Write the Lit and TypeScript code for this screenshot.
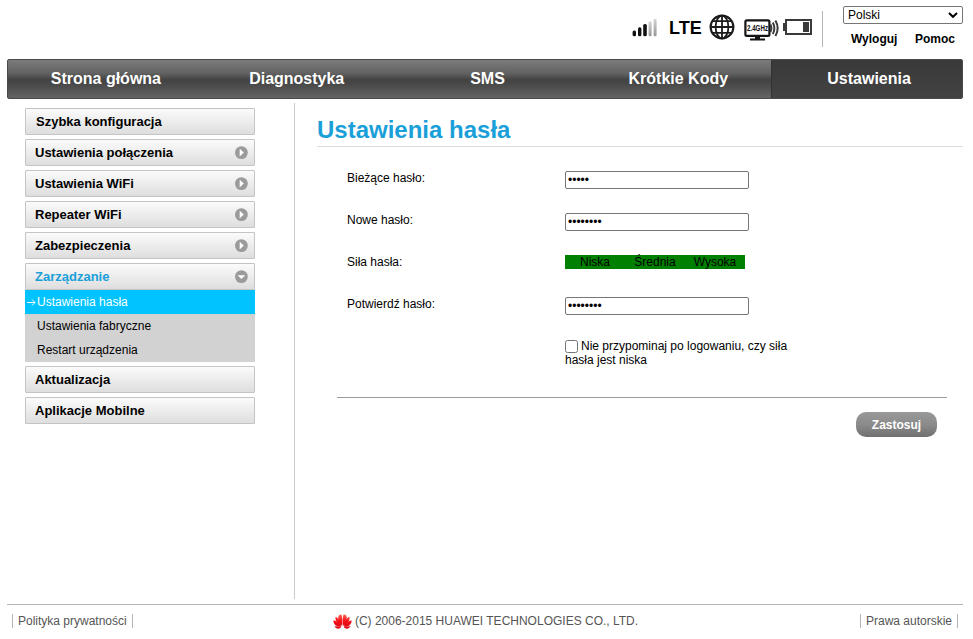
import { LitElement, html, css, svg, nothing } from "lit";
import { customElement, state } from "lit/decorators.js";
import { classMap } from "lit/directives/class-map.js";

interface MenuEntry {
  label: string;
  arrow?: "right" | "down";
  children?: string[];
}

const NAV = ["Strona główna", "Diagnostyka", "SMS", "Krótkie Kody", "Ustawienia"];

const MENU: MenuEntry[] = [
  { label: "Szybka konfiguracja" },
  { label: "Ustawienia połączenia", arrow: "right" },
  { label: "Ustawienia WiFi", arrow: "right" },
  { label: "Repeater WiFi", arrow: "right" },
  { label: "Zabezpieczenia", arrow: "right" },
  {
    label: "Zarządzanie",
    arrow: "down",
    children: ["Ustawienia hasła", "Ustawienia fabryczne", "Restart urządzenia"],
  },
  { label: "Aktualizacja" },
  { label: "Aplikacje Mobilne" },
];

const signalIcon = html`<svg class="signal" width="26" height="20" viewBox="0 0 26 20">
  <defs>
    <linearGradient id="dim" x1="0" y1="0" x2="0" y2="1">
      <stop offset="0" stop-color="#d4d4d4" />
      <stop offset="1" stop-color="#969696" />
    </linearGradient>
  </defs>
  <rect x="0.6" y="11.4" width="3.4" height="5.8" rx="1.5" fill="#111" />
  <rect x="6" y="8.2" width="3.4" height="9" rx="1.5" fill="#111" />
  <rect x="11.2" y="5" width="3.6" height="12.2" rx="1.5" fill="#111" />
  <rect x="16.6" y="2.4" width="3" height="14.8" rx="1.2" fill="url(#dim)" />
  <rect x="21.6" y="0" width="3" height="17.2" rx="1.2" fill="url(#dim)" />
</svg>`;

const globeIcon = html`<svg class="globe" width="26" height="26" viewBox="0 0 26 26">
  <g fill="none" stroke="#1b1b1b" stroke-width="1.8">
    <circle cx="13" cy="13" r="11.4" stroke-width="2.1" />
    <ellipse cx="13" cy="13" rx="6.4" ry="11.4" />
    <path d="M13 1.5V24.5M1.5 13H24.5M3.4 7.2H22.6M3.4 18.8H22.6" />
  </g>
</svg>`;

const wifiIcon = html`<svg class="wifi" width="36" height="24" viewBox="0 0 36 24">
  <rect x="1.4" y="3.4" width="24" height="15.4" rx="1.4" fill="#fff" stroke="#151515" stroke-width="2.2" />
  <path d="M11 19.5H16V21.4H21V23.4H6V21.4H11Z" fill="#151515" />
  <g fill="none" stroke="#3a3a3a" stroke-width="2">
    <path d="M26.4 7.6Q28.4 11.2 26.4 15" />
    <path d="M28.8 5.4Q32 11.2 28.8 17" />
    <path d="M31.4 3.4Q36 11.2 31.4 19" />
  </g>
  <text class="ghz" x="3" y="14.2" textLength="21" lengthAdjust="spacingAndGlyphs">2.4GHz</text>
</svg>`;

const batteryIcon = html`<svg class="battery" width="30" height="16" viewBox="0 0 30 16">
  <rect x="3" y="1" width="25" height="14" fill="#fff" stroke="#3a3a3a" stroke-width="2" />
  <rect x="0" y="4" width="3" height="8" fill="#3a3a3a" />
  <rect x="20" y="3" width="6" height="10" fill="#3a3a3a" />
</svg>`;

const arrowIcon = (dir: "right" | "down") => html`<svg width="14" height="14" viewBox="0 0 14 14">
  <circle cx="7.4" cy="6.6" r="6.4" fill="#9b9b9b" />
  ${dir === "right"
    ? svg`<path d="M5.7 2.8L9.8 6.5L5.7 10.4Z" fill="#fff" />`
    : svg`<path d="M3.6 5.2H11.2L7.4 9Z" fill="#fff" />`}
</svg>`;

const pointerIcon = html`<svg width="9" height="8" viewBox="0 0 9 8">
  <path d="M0 4.5H8M5 1.5L8 4.5L5 7.5" fill="none" stroke="#fff" stroke-width="1" />
</svg>`;

const chevronIcon = html`<svg width="10" height="6" viewBox="0 0 10 6">
  <path d="M1 1L5 4.8L9 1" fill="none" stroke="#000" stroke-width="2" />
</svg>`;

const flowerIcon = html`<svg class="flower" width="19" height="15" viewBox="0 0 19 15">
  <defs>
    <linearGradient id="petal" x1="0" y1="0" x2="0" y2="15" gradientUnits="userSpaceOnUse">
      <stop offset="0" stop-color="#ff6a5a" />
      <stop offset="0.45" stop-color="#f5141a" />
      <stop offset="1" stop-color="#d8000c" />
    </linearGradient>
  </defs>
  <g fill="url(#petal)">
    <path d="M9.2 11.8C5.5 7.6 4.3 3.8 5.9 1.6C6.6 .8 7.6 .5 8.5 .5C9.4 3 9.5 7.5 9.2 11.8Z" />
    <path d="M9.8 11.8C13.5 7.6 14.7 3.8 13.1 1.6C12.4 .8 11.4 .5 10.5 .5C9.6 3 9.5 7.5 9.8 11.8Z" />
    <path d="M8.6 12.2C4.4 10.2 1.8 6.4 2.6 2.8C5.3 3.6 7.8 7.8 8.6 12.2Z" />
    <path d="M10.4 12.2C14.6 10.2 17.2 6.4 16.4 2.8C13.7 3.6 11.2 7.8 10.4 12.2Z" />
    <path d="M8.4 12.7C3.8 13.2 0 10.4 .5 6.2C3.5 6.8 6.8 9.4 8.4 12.7Z" />
    <path d="M10.6 12.7C15.2 13.2 19 10.4 18.5 6.2C15.5 6.8 12.2 9.4 10.6 12.7Z" />
    <path d="M8.2 13.1C6.4 15.2 3.2 15.4 1.4 12.2C3.8 12.4 6.2 12.6 8.2 13.1Z" />
    <path d="M10.8 13.1C12.6 15.2 15.8 15.4 17.6 12.2C15.2 12.4 12.8 12.6 10.8 13.1Z" />
  </g>
</svg>`;

@customElement("app-root")
class AppRoot extends LitElement {
  @state() private activeTab = "Ustawienia";
  @state() private activePage = "Ustawienia hasła";

  static styles = css`
    :host {
      display: flex;
      flex-direction: column;
      box-sizing: border-box;
      width: 973px;
      height: 639px;
      padding: 0 10px 0 7px;
      overflow: hidden;
      background: #fff;
      color: #000;
      font: 12px/14px "Liberation Sans", Arial, sans-serif;
    }
    svg { display: block; flex: none; overflow: visible; }
    header {
      display: flex;
      justify-content: flex-end;
      height: 59px;
    }
    .signal { margin: 19px 11px 0 0; }
    .lte {
      width: 40px;
      margin-top: 18px;
      font: bold 18px/21px "Liberation Sans", Arial, sans-serif;
    }
    .globe { margin: 14px 9px 0 0; }
    .wifi { margin: 17px 3px 0 0; }
    .battery { margin-top: 19px; }
    .ghz { font: bold 9px "Liberation Sans", Arial, sans-serif; fill: #111; }
    .account {
      box-sizing: border-box;
      width: 141px;
      margin-left: 9px;
      padding-top: 6px;
      display: grid;
      grid-template-columns: 1px 1fr;
      column-gap: 20px;
    }
    .rule { height: 36px; margin-top: 5px; background: #b4b4b4; }
    .language {
      box-sizing: border-box;
      display: flex;
      align-items: center;
      justify-content: space-between;
      height: 18px;
      padding: 0 4px;
      border: 1px solid #767676;
      border-radius: 2px;
    }
    .links {
      display: flex;
      justify-content: space-between;
      margin: 8px 8px 0;
      font-weight: bold;
    }
    nav {
      box-sizing: border-box;
      display: grid;
      grid-template-columns: repeat(5, 1fr);
      flex: none;
      height: 40px;
      border: 1px solid #4a4a4a;
      border-radius: 2px;
      background: linear-gradient(#7b7b7b 0, #636363 34%, #434343 52%, #464646 60%, #646464 100%);
    }
    .tab {
      padding-left: 5px;
      color: #fff;
      text-align: center;
      font: bold 16px/37px "Liberation Sans", Arial, sans-serif;
    }
    .tab.active { background: linear-gradient(#393939, #424242); box-shadow: inset 1px 0 #333; }
    .body { display: flex; flex: none; height: 505px; }
    aside {
      box-sizing: border-box;
      width: 288px;
      height: 496px;
      margin-top: 4px;
      padding: 5px 39px 0 18px;
      border-right: 1px solid #ccc;
    }
    .entry {
      box-sizing: border-box;
      display: flex;
      align-items: center;
      justify-content: space-between;
      height: 27px;
      margin-bottom: 4px;
      padding: 0 6px 0 9px;
      border: 1px solid #c4c4c4;
      border-radius: 1px;
      background: linear-gradient(#fbfbfb, #dedede);
      font: bold 13px/25px "Liberation Sans", Arial, sans-serif;
    }
    .entry:first-child { padding-left: 10px; }
    .entry.open { margin-bottom: 0; color: #1a9fd9; }
    .submenu { margin-bottom: 4px; background: #d2d2d2; }
    .sub {
      display: flex;
      align-items: center;
      height: 24px;
      padding-left: 12px;
    }
    .sub.active { padding-left: 2px; gap: 1px; background: #00c3ff; color: #fff; }
    main { display: flex; flex-direction: column; flex: 1; margin-left: 22px; padding-top: 14px; }
    h1 {
      margin: 0;
      height: 33px;
      border-bottom: 1px solid #dcdcdc;
      color: #1a9fd9;
      font: bold 24px/34px "Liberation Sans", Arial, sans-serif;
    }
    form { margin: 24px 16px 0 20px; height: 226px; border-bottom: 1px solid #9c9c9c; }
    .row {
      display: grid;
      grid-template-columns: 218px 230px;
      align-items: start;
      height: 42px;
      padding-left: 10px;
    }
    .password {
      box-sizing: border-box;
      width: 184px;
      height: 18px;
      padding: 1px 2px;
      border: 1px solid #767676;
      border-radius: 2px;
      outline: 0;
      background: #fff;
      color: #000;
      font: 12px/14px "Liberation Sans", Arial, sans-serif;
    }
    .strength {
      display: grid;
      grid-template-columns: repeat(3, 60px);
      width: 180px;
      height: 14px;
      background: #008000;
      text-align: center;
    }
    .check {
      width: 13px;
      height: 13px;
      margin: 0 3px 0 0;
      vertical-align: -3px;
    }
    .apply {
      align-self: flex-end;
      width: 81px;
      height: 25px;
      margin: 14px 26px 0 0;
      padding: 1px 0 0;
      border: 0;
      border-radius: 10px;
      background: linear-gradient(#999, #8b8b8b 50%, #707070);
      color: #fff;
      font: bold 12px/24px "Liberation Sans", Arial, sans-serif;
    }
    footer {
      display: grid;
      grid-template-columns: 1fr auto 1fr;
      align-items: start;
      flex: 1;
      padding: 9px 5px 0;
      border-top: 1px solid #b4b4b4;
      color: #555;
    }
    .legal { justify-self: start; padding: 0 5px; border: solid #b4b4b4; border-width: 0 1px; }
    .legal.end { justify-self: end; }
    .copyright { display: flex; gap: 3px; padding-left: 1px; }
  `;

  private password(length: number) {
    return html`<input class="password" type="password" .value=${"x".repeat(length)} />`;
  }

  private renderEntry(entry: MenuEntry) {
    return html`<div class=${classMap({ entry: true, open: !!entry.children })}>
        <span>${entry.label}</span>${entry.arrow ? arrowIcon(entry.arrow) : nothing}
      </div>
      ${entry.children
        ? html`<div class="submenu">
            ${entry.children.map((name) => {
              const active = name === this.activePage;
              return html`<div
                class=${classMap({ sub: true, active })}
                @click=${() => (this.activePage = name)}
              >${active ? pointerIcon : nothing}<span>${name}</span></div>`;
            })}
          </div>`
        : nothing}`;
  }

  render() {
    return html`
      <header>
        ${signalIcon}<span class="lte">LTE</span>${globeIcon}${wifiIcon}${batteryIcon}
        <div class="account">
          <div class="rule"></div>
          <div>
            <div class="language"><span>Polski</span>${chevronIcon}</div>
            <div class="links"><span>Wyloguj</span><span>Pomoc</span></div>
          </div>
        </div>
      </header>
      <nav>
        ${NAV.map(
          (name) => html`<div
            class=${classMap({ tab: true, active: name === this.activeTab })}
            @click=${() => (this.activeTab = name)}
          >${name}</div>`
        )}
      </nav>
      <div class="body">
        <aside>${MENU.map((entry) => this.renderEntry(entry))}</aside>
        <main>
          <h1>${this.activePage}</h1>
          <form>
            <div class="row"><label>Bieżące hasło:</label>${this.password(5)}</div>
            <div class="row"><label>Nowe hasło:</label>${this.password(8)}</div>
            <div class="row">
              <label>Siła hasła:</label>
              <div class="strength"><span>Niska</span><span>Średnia</span><span>Wysoka</span></div>
            </div>
            <div class="row"><label>Potwierdź hasło:</label>${this.password(8)}</div>
            <div class="row">
              <span></span>
              <label
                ><input class="check" type="checkbox" />Nie przypominaj po logowaniu, czy siła hasła
                jest niska</label
              >
            </div>
          </form>
          <button class="apply" type="button">Zastosuj</button>
        </main>
      </div>
      <footer>
        <span class="legal">Polityka prywatności</span>
        <span class="copyright">${flowerIcon}<span>(C) 2006-2015 HUAWEI TECHNOLOGIES CO., LTD.</span></span>
        <span class="legal end">Prawa autorskie</span>
      </footer>
    `;
  }
}
